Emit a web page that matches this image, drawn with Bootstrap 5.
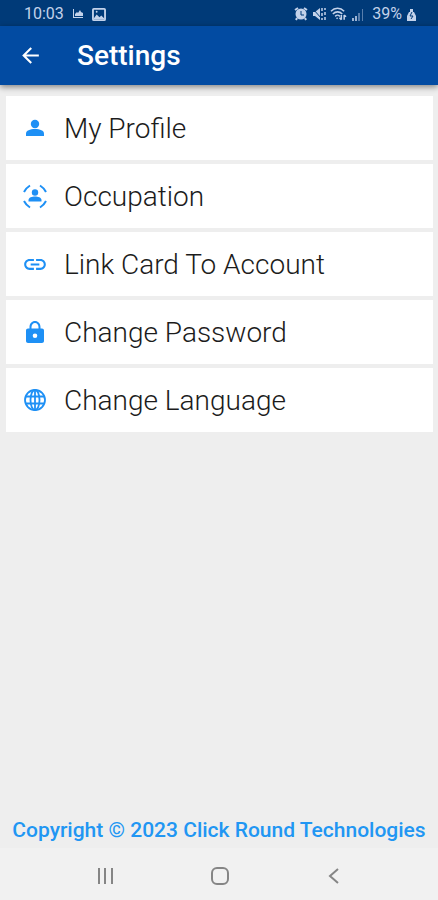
<!DOCTYPE html>
<html lang="en">
<head>
<meta charset="utf-8">
<meta name="viewport" content="width=device-width, initial-scale=1">
<title>Settings</title>
<link href="https://cdn.jsdelivr.net/npm/bootstrap@5.3.0/dist/css/bootstrap.min.css" rel="stylesheet">
<style>
  body { font-family: Roboto, "Liberation Sans", sans-serif; background: #eee; }
  svg { display: block; flex: none; }
  .status-bar { height: 26px; background: #003a78; color: #c3d2ea; font-size: 16px; line-height: 24px; padding: 2px 21px 0 24px; }
  .app-bar { height: 59px; background: #024ba2; box-shadow: 0 2px 6px rgba(0, 0, 0, .45); padding: 0 18px; gap: 34px; }
  .app-bar h1 { font-size: 28px; line-height: 36px; font-weight: 500; }
  .settings-list { padding: 11px 5px 0 6px; gap: 4px; }
  .setting { height: 64px; padding: 2px 16px 0; gap: 16px; color: #1c1c1c; font-size: 28px; line-height: 36px; font-weight: 300; }
  .setting svg { color: #1e90f5; width: 26px; height: 26px; }
  .copyright { color: #2196f3; font-size: 21px; line-height: 28px; font-weight: 500; }
  .system-nav { height: 52px; background: #f1f1f1; color: #858585; padding: 4px 48px 0; }
</style>
</head>
<body class="min-vh-100 d-flex flex-column">
<div class="status-bar d-flex align-items-center justify-content-between">
  <div class="d-flex align-items-center gap-2">
    <span>10:03</span>
    <svg width="12" height="12" viewBox="0 0 12 12" fill="currentColor" aria-hidden="true"><path d="M1 1h1v8h9v1H1zM3 8V6l2-2 1 1 2-3 1 2 2 1v3z"/></svg>
    <svg width="14" height="13" viewBox="0 0 15 14" fill="none" stroke="currentColor" stroke-width="2" aria-hidden="true"><rect x="1" y="1" width="13" height="12" rx="1"/><path d="M2 11l3-4 3 3 2-2 4 4H2z" fill="currentColor" stroke="none"/><circle cx="5" cy="4" r="1" fill="currentColor" stroke="none"/></svg>
  </div>
  <div class="d-flex align-items-center gap-1">
    <svg width="14" height="14" viewBox="0 0 14 14" aria-hidden="true"><path d="M1 3l3-2M13 3l-3-2M3 11l-1 2M11 11l1 2" stroke="currentColor" stroke-width="2"/><circle cx="7" cy="7" r="5.500" fill="currentColor"/><path d="M7 4v4h3" fill="none" stroke="#003a78"/></svg>
    <svg width="14" height="14" viewBox="0 0 14 14" aria-hidden="true"><path d="M1 5h2l5-4v12L3 9H1z" fill="currentColor"/><path d="M1 2l9 10" stroke="#003a78"/><path d="M10 1v3M10 6v3M10 11v2M13 1v2M13 5v3M13 10v3" fill="none" stroke="currentColor" stroke-width="1.500"/></svg>
    <svg width="17" height="14" viewBox="0 0 18 14" fill="none" stroke="currentColor" stroke-width="1.6" aria-hidden="true"><path d="M1 4c4-4 10-4 14 0M3 7c3-3 7-3 10 0M5.500 9.500c2-2 3-2 5 0"/><path d="M7 11l1 1M12 8v5M10 11l2 2M15 13V8M17 10l-2-2"/></svg>
    <svg width="13" height="13" viewBox="0 0 13 13" fill="currentColor" aria-hidden="true"><path d="M1 10h2v3H1zM4 8h2v5H4z" opacity=".8"/><path d="M7 5h2v8H7zM11 1h1v12h-1z" opacity=".45"/></svg>
    <span class="ms-1">39%</span>
    <svg width="11" height="13" viewBox="0 0 11 13" aria-hidden="true"><path d="M4 1h3v3h1l2 4v5H1V8l2-4h1z" fill="currentColor"/><path d="M6 4L4 8h3l-2 3" fill="none" stroke="#003a78"/></svg>
  </div>
</div>
<header class="app-bar d-flex align-items-center text-white">
  <button type="button" class="btn p-0 border-0 text-white" aria-label="Back">
    <svg width="25" height="25" viewBox="0 0 24 24" fill="currentColor"><path d="M20 11H7.830l5.590-5.590L12 4l-8 8 8 8 1.410-1.410L7.830 13H20z"/></svg>
  </button>
  <h1 class="m-0">Settings</h1>
</header>
<main class="flex-grow-1">
  <nav class="settings-list d-flex flex-column" aria-label="Settings">
    <a href="#profile" class="setting bg-white d-flex align-items-center text-decoration-none">
      <svg viewBox="0 0 26 26" fill="currentColor" aria-hidden="true"><circle cx="13" cy="8" r="4.200"/><path d="M4 20v-2.500C4 14.500 8 13 13 13s9 1.500 9 4.500V20z"/></svg>
      <span>My Profile</span>
    </a>
    <a href="#occupation" class="setting bg-white d-flex align-items-center text-decoration-none">
      <svg viewBox="0 0 26 26" fill="currentColor" aria-hidden="true"><circle cx="13" cy="8.500" r="3.200"/><path d="M6.500 17.500v-1.500c0-2.500 3.500-3.500 6.500-3.500s6.500 1 6.500 3.500v1.500z"/><path d="M2 8Q4 4 8 1.500M18 1.500Q22 4 24 8M2 17Q4 21 8 23.500M24 17Q22 21 18 23.500" fill="none" stroke="currentColor" stroke-width="2"/></svg>
      <span>Occupation</span>
    </a>
    <a href="#link-card" class="setting bg-white d-flex align-items-center text-decoration-none">
      <svg viewBox="0 0 24 24" fill="currentColor" aria-hidden="true"><path d="M3.900 11.500c0-1.710 1.390-3.100 3.100-3.100h4V6.500H7c-2.760 0-5 2.240-5 5s2.240 5 5 5h4v-1.900H7c-1.710 0-3.100-1.390-3.100-3.100zM8 12.500h8v-2H8v2zm9-6h-4v1.900h4c1.710 0 3.100 1.390 3.100 3.100s-1.390 3.100-3.100 3.100h-4v1.900h4c2.760 0 5-2.240 5-5s-2.240-5-5-5z"/></svg>
      <span>Link Card To Account</span>
    </a>
    <a href="#password" class="setting bg-white d-flex align-items-center text-decoration-none">
      <svg viewBox="0 0 26 26" fill="currentColor" aria-hidden="true"><path d="M20 8.500h-1.500V7C18.500 3.500 16 1 13 1S7.500 3.500 7.500 7v1.500H6c-1.100 0-2 .9-2 2V21c0 1.100.9 2 2 2h14c1.100 0 2-.9 2-2V10.500c0-1.100-.9-2-2-2zM13 18a2.300 2.300 0 1 1 0-4.600 2.300 2.300 0 0 1 0 4.600zm3.500-9.500h-7V7c0-2.300 1.500-4 3.500-4s3.500 1.700 3.500 4z"/></svg>
      <span>Change Password</span>
    </a>
    <a href="#language" class="setting bg-white d-flex align-items-center text-decoration-none">
      <svg viewBox="0 0 26 26" fill="none" stroke="currentColor" stroke-width="1.800" aria-hidden="true"><circle cx="13" cy="12" r="10"/><ellipse cx="13" cy="12" rx="4.500" ry="10"/><path d="M4 8.500h18M4 15.500h18M13 2v20"/></svg>
      <span>Change Language</span>
    </a>
  </nav>
</main>
<footer>
  <p class="copyright text-center mb-1">Copyright © 2023 Click Round Technologies</p>
  <div class="system-nav d-flex align-items-center justify-content-around">
    <button type="button" class="btn p-0 border-0 text-reset" aria-label="Recent apps"><svg width="20" height="20" viewBox="0 0 20 20" fill="none" stroke="currentColor" stroke-width="2"><path d="M4 2v16M10 2v16M17 2v16"/></svg></button>
    <button type="button" class="btn p-0 border-0 text-reset" aria-label="Home"><svg width="20" height="20" viewBox="0 0 20 20" fill="none" stroke="currentColor" stroke-width="2"><rect x="3" y="2" width="16" height="16" rx="5"/></svg></button>
    <button type="button" class="btn p-0 border-0 text-reset" aria-label="Go back"><svg width="20" height="20" viewBox="0 0 20 20" fill="none" stroke="currentColor" stroke-width="2"><path d="M15 3l-8 7 8 7"/></svg></button>
  </div>
</footer>
<script src="https://cdn.jsdelivr.net/npm/bootstrap@5.3.0/dist/js/bootstrap.bundle.min.js"></script>
</body>
</html>
